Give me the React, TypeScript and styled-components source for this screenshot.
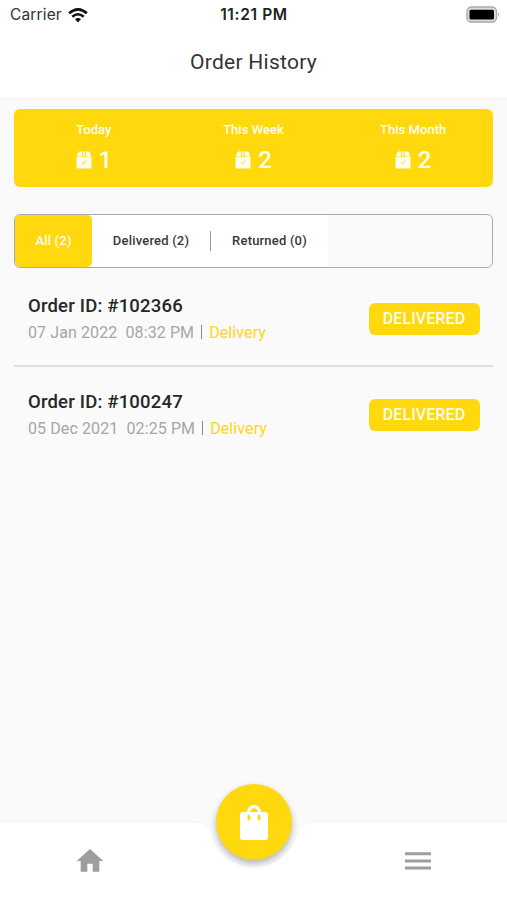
import React from "react";
import styled, { createGlobalStyle } from "styled-components";

const GlobalStyle = createGlobalStyle`
  * { box-sizing: border-box; }
  html, body { margin: 0; padding: 0; background: #fafafa; }
  body { font-family: Roboto, sans-serif; overflow: hidden; }
`;

const yellow = "#ffd80d";

const Screen = styled.div`
  width: 507px;
  height: 900px;
  display: flex;
  flex-direction: column;
  background: #fafafa;
`;

const Header = styled.header`
  height: 97px;
  background: #fff;
  box-shadow: 0 0 1px rgba(0, 0, 0, 0.04);
`;

const StatusBar = styled.div`
  height: 30px;
  padding: 0 7px 0 10px;
  display: grid;
  grid-template-columns: 1fr auto 1fr;
  align-items: center;
  font-family: Inter, sans-serif;
  color: #333;
`;

const Carrier = styled.div`
  display: flex;
  align-items: center;
  gap: 6px;
  font-size: 15.5px;
  letter-spacing: 0.15px;
  line-height: 30px;
`;

const Clock = styled.div`
  font-size: 15.5px;
  font-weight: 600;
  color: #222;
  letter-spacing: 0.65px;
  padding-right: 2px;
  margin-top: -1px;
`;

const BatterySlot = styled.div`
  display: flex;
  justify-content: flex-end;
  padding-bottom: 2px;
`;

const Title = styled.h1`
  margin: 0;
  padding-top: 18px;
  text-align: center;
  font-size: 21px;
  line-height: 28px;
  font-weight: 400;
  letter-spacing: 0.26px;
  color: #333;
`;

const Content = styled.main`
  flex: 1;
  padding: 12px 14px 0;
`;

const Summary = styled.section`
  height: 78px;
  display: grid;
  grid-template-columns: repeat(3, 1fr);
  border-radius: 6px;
  background: ${yellow};
  color: #fffdf0;
`;

const Stat = styled.div`
  display: flex;
  flex-direction: column;
  align-items: center;
  padding-top: 12px;
`;

const StatLabel = styled.div`
  font-size: 13px;
  line-height: 18px;
  font-weight: 500;
  letter-spacing: 0.04px;
`;

const StatValue = styled.div`
  display: flex;
  align-items: center;
  gap: 7px;
  margin-top: 6px;
  font-size: 24px;
  line-height: 30px;
  font-weight: 500;
`;

const Tabs = styled.nav`
  height: 54px;
  margin-top: 27px;
  display: flex;
  align-items: stretch;
  border: 1.5px solid #aaa;
  border-radius: 6px;
  overflow: hidden;
`;

const Tab = styled.button<{ $active?: boolean; $width: number }>`
  width: ${(p) => p.$width}px;
  padding: 0 0 2px;
  border: 0;
  border-radius: ${(p) => (p.$active ? "5px" : "0")};
  background: ${(p) => (p.$active ? yellow : "#fff")};
  color: ${(p) => (p.$active ? "#fffdf0" : "#383838")};
  font: 500 13px Roboto, sans-serif;
  letter-spacing: 0.19px;
`;

const TabDivider = styled.div`
  width: 1px;
  background: linear-gradient(#fff 16px, #999 16px, #999 36px, #fff 36px);
`;

const Orders = styled.ul`
  list-style: none;
  margin: 0;
  padding: 0;
`;

const Order = styled.li<{ $divided?: boolean }>`
  height: ${(p) => (p.$divided ? "99px" : "96px")};
  display: flex;
  justify-content: space-between;
  align-items: flex-start;
  padding: ${(p) => (p.$divided ? "26px" : "23px")} 13.5px 0 14px;
  border-bottom: ${(p) => (p.$divided ? "2px solid #dedede" : "0")};
`;

const OrderId = styled.div`
  font-size: 18.5px;
  line-height: 24px;
  font-weight: 500;
  letter-spacing: 0.19px;
  color: #262626;
`;

const OrderMeta = styled.div`
  display: flex;
  margin-top: 3px;
  font-size: 16px;
  line-height: 24px;
  letter-spacing: 0.1px;
  color: #a6a6a6;
  white-space: pre;
`;

const Kind = styled.span`
  color: ${yellow};
`;

const Bar = styled.i`
  align-self: center;
  width: 1px;
  height: 14px;
  margin: 0 7px 2px;
  background: #8c8c8c;
`;

const Badge = styled.span`
  width: 111px;
  height: 32px;
  margin-top: 9px;
  border-radius: 6px;
  background: ${yellow};
  color: #fffdf0;
  font-size: 16px;
  line-height: 32px;
  font-weight: 500;
  letter-spacing: 0.1px;
  text-align: center;
`;

const BottomBar = styled.footer`
  position: relative;
  height: 78px;
`;

const BarShape = styled.svg`
  position: absolute;
  left: 0;
  top: -3px;
`;

const BarItems = styled.div`
  position: relative;
  height: 78px;
  display: flex;
  justify-content: space-between;
  align-items: center;
  padding: 0 73px 0 74px;
  color: #9e9e9e;
`;

const Fab = styled.button`
  position: absolute;
  left: 216px;
  top: -38px;
  width: 76px;
  height: 76px;
  display: grid;
  place-items: center;
  padding: 0;
  border: 0;
  border-radius: 50%;
  background: ${yellow};
  box-shadow: 0 4px 6px rgba(0, 0, 0, 0.22), 0 2px 9px rgba(0, 0, 0, 0.08);
`;

const WifiIcon = () => (
  <svg width="20" height="15" viewBox="0 0 20 15" fill="none" stroke="#111" strokeWidth="2.6">
    <path d="M1.1 5.3Q10-2.6 18.9 5.3" />
    <path d="M4.3 8.7Q10 3.8 15.7 8.7" />
    <path d="M6.9 11.1Q10 8.7 13.1 11.1L10 14.4Z" fill="#111" stroke="none" />
  </svg>
);

const BatteryIcon = () => (
  <svg width="34" height="17" viewBox="0 0 34 17">
    <rect x="1" y="1" width="29.5" height="15" rx="4.5" fill="#dcdcdc" stroke="#a8a8a8" strokeWidth="1.3" />
    <rect x="3.5" y="3.7" width="24.5" height="9.8" rx="1.5" fill="#000" />
    <path d="M32 6.3Q34 8.5 32 10.7Z" fill="#aaa" />
  </svg>
);

const PackageIcon = () => (
  <svg width="16" height="18" viewBox="0 0 16 18">
    <path d="M3.6.5H6.500L6 5.500H.8L2 1.800Q2.500.5 3.600.5ZM9.500.5h2.900q1.100 0 1.600 1.300L15.200 5.500H10Z" fill="#fffdf0" />
    <path d="M7.300.5h1.400l.5 5H6.800Z" fill="#fffdf0" opacity=".75" />
    <path d="M.5 6h15v10q0 1.500-1.500 1.500H2Q.5 17.500.5 16Z" fill="#fffdf0" />
    <path d="m5.700 11.300 1.500 1.500 3.200-3" fill="none" stroke="#ffe36a" strokeWidth="1.200" />
  </svg>
);

const HomeIcon = () => (
  <svg width="32" height="32" viewBox="0 0 24 24" fill="currentColor">
    <path d="M10 20v-6h4v6h5v-8h3L12 3 2 12h3v8z" />
  </svg>
);

const MenuIcon = () => (
  <svg width="32" height="32" viewBox="0 0 32 32" fill="currentColor">
    <path d="M3 7.300h26v3H3zM3 14.400h26v3H3zM3 21.500h26v3H3z" />
  </svg>
);

const BagIcon = () => (
  <svg width="28" height="35" viewBox="0 0 28 35">
    <path d="M8.500 8C8.500-.5 19.500-.5 19.500 8" fill="none" stroke="#fff" strokeWidth="3.200" />
    <rect y="7" width="28" height="28" rx="3" fill="#fff" />
    <path d="M9 11.500v2.500M19 11.500v2.500" stroke={yellow} strokeWidth="2.800" strokeLinecap="round" />
  </svg>
);

const stats = [
  { label: "Today", value: 1 },
  { label: "This Week", value: 2 },
  { label: "This Month", value: 2 },
];

const orders = [
  { id: "102366", date: "07 Jan 2022  08:32 PM" },
  { id: "100247", date: "05 Dec 2021  02:25 PM" },
];

export default function App() {
  return (
    <Screen>
      <GlobalStyle />
      <Header>
        <StatusBar>
          <Carrier>Carrier <WifiIcon /></Carrier>
          <Clock>11:21 PM</Clock>
          <BatterySlot><BatteryIcon /></BatterySlot>
        </StatusBar>
        <Title>Order History</Title>
      </Header>
      <Content>
        <Summary>
          {stats.map((s) => (
            <Stat key={s.label}>
              <StatLabel>{s.label}</StatLabel>
              <StatValue><PackageIcon />{s.value}</StatValue>
            </Stat>
          ))}
        </Summary>
        <Tabs>
          <Tab $active $width={77}>All (2)</Tab>
          <Tab $width={118}>Delivered (2)</Tab>
          <TabDivider />
          <Tab $width={117}>Returned (0)</Tab>
        </Tabs>
        <Orders>
          {orders.map((o, i) => (
            <Order key={o.id} $divided={i === 0}>
              <div>
                <OrderId>Order ID: #{o.id}</OrderId>
                <OrderMeta>{o.date}<Bar /><Kind>Delivery</Kind></OrderMeta>
              </div>
              <Badge>DELIVERED</Badge>
            </Order>
          ))}
        </Orders>
      </Content>
      <BottomBar>
        <BarShape width="507" height="81" viewBox="0 0 507 81">
          <path
            d="M-2 3H194Q209 3 211 12C216 34 233 47 254 47S292 34 297 12Q299 3 314 3H509V83H-2Z"
            fill="#fff"
            stroke="#f5f5f5"
            strokeWidth="1"
          />
        </BarShape>
        <BarItems><HomeIcon /><MenuIcon /></BarItems>
        <Fab aria-label="Orders"><BagIcon /></Fab>
      </BottomBar>
    </Screen>
  );
}
